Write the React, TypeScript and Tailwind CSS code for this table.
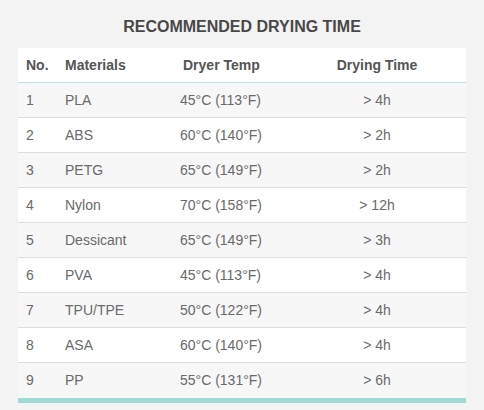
const rows = [
	["1", "PLA", "45°C (113°F)", "> 4h"],
	["2", "ABS", "60°C (140°F)", "> 2h"],
	["3", "PETG", "65°C (149°F)", "> 2h"],
	["4", "Nylon", "70°C (158°F)", "> 12h"],
	["5", "Dessicant", "65°C (149°F)", "> 3h"],
	["6", "PVA", "45°C (113°F)", "> 4h"],
	["7", "TPU/TPE", "50°C (122°F)", "> 4h"],
	["8", "ASA", "60°C (140°F)", "> 4h"],
	["9", "PP", "55°C (131°F)", "> 6h"]
];

export default function App() {
	return (
		<div className="w-[484px] h-[410px] bg-[#f3f3f3] pt-[17px] px-[18px] font-['Liberation_Sans',Arial,sans-serif]">
			<h1 className="text-center text-[16px] leading-[20px] font-bold text-[#484848] mb-[11px]">
				RECOMMENDED DRYING TIME
			</h1>
			<div className="bg-white">
				<div className="grid grid-cols-[39px_115px_118px_1fr] h-[35px] items-center text-[14px] font-bold text-[#555] border-b border-[#bfe1e3]">
					<div className="pl-[8px]">No.</div>
					<div className="pl-[8px]">Materials</div>
					<div className="pl-[11px]">Dryer Temp</div>
					<div className="text-center pr-[2px]">Drying Time</div>
				</div>
				{rows.map((r, i) => (
					<div
						key={r[0]}
						className={`grid grid-cols-[39px_115px_118px_1fr] h-[35px] items-center text-[14px] text-[#6a6a6a] ${i < rows.length - 1 ? "border-b border-[#dedede]" : ""} ${i % 2 === 0 ? "bg-[#f7f7f7]" : "bg-white"}`}
					>
						<div className="pl-[8px]">{r[0]}</div>
						<div className="pl-[8px]">{r[1]}</div>
						<div className="pl-[8px]">{r[2]}</div>
						<div className="text-center pr-[2px]">{r[3]}</div>
					</div>
				))}
				<div className="h-[5px] bg-[#9edbd7]" />
			</div>
		</div>
	);
}
